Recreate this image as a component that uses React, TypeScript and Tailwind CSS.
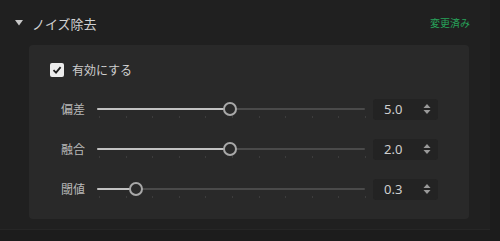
import React from "react";

const jp = { fontFamily: '"Noto Sans CJK JP", "Noto Sans", sans-serif' };

function Spinner() {
  return (
    <svg width="8" height="12" viewBox="0 0 8 12" className="shrink-0">
      <path d="M4 1 L7.5 5 L0.5 5 Z" fill="#9a9a9a" />
      <path d="M4 11 L7.5 7 L0.5 7 Z" fill="#9a9a9a" />
    </svg>
  );
}

function SliderRow({ label, value, pos }: { label: string; value: string; pos: number }) {
  const ticks = Array.from({ length: 11 }, (_, i) => i);
  return (
    <div className="flex h-[40px] items-center pl-[32px]">
      <div className="w-[36px] shrink-0 text-[12px] leading-none text-[#b8b8b8]" style={jp}>
        {label}
      </div>
      <div className="relative h-[40px] w-[268px] shrink-0">
        <div className="absolute left-0 right-0 top-[19px] h-[2px] rounded bg-[#4a4a4a]" />
        <div
          className="absolute left-0 top-[19px] h-[2px] rounded bg-[#c2c2c2]"
          style={{ width: pos }}
        />
        {ticks.map((i) => (
          <div
            key={i}
            className="absolute top-[27px] h-[2px] w-[1px] bg-[#3c3c3c]"
            style={{ left: 2 + i * 26.6 }}
          />
        ))}
        <div
          className="absolute top-[13px] h-[14px] w-[14px] rounded-full border-2 border-[#a8a8a8] bg-[#2a2a2a]"
          style={{ left: pos - 7 }}
        />
      </div>
      <div className="ml-[8px] flex h-[21px] w-[65px] shrink-0 items-center justify-between rounded-[3px] bg-[#232323] pl-[11px] pr-[7px]">
        <span className="text-[13px] leading-none text-[#cfcfcf]" style={{ fontFamily: '"Noto Sans", "Liberation Sans", sans-serif' }}>
          {value}
        </span>
        <Spinner />
      </div>
    </div>
  );
}

export default function App() {
  return (
    <div className="flex h-[241px] w-[500px] flex-col bg-[#1c1c1c]" style={jp}>
      <div className="flex h-[230px] w-[490px] flex-col border-b border-[#262626] bg-[#202020]">
        <div className="flex h-[45px] items-center pl-[15px] pr-[20px] pt-[1px]">
          <svg width="8" height="6" viewBox="0 0 8 6" className="shrink-0">
            <path d="M0 0 L8 0 L4 5.5 Z" fill="#c8c8c8" />
          </svg>
          <span className="ml-[9px] text-[13px] leading-none text-[#d2d2d2]">ノイズ除去</span>
          <span className="ml-auto text-[10px] leading-none text-[#27a35a]">変更済み</span>
        </div>
        <div className="ml-[29px] mr-[21px] flex flex-col rounded-[4px] bg-[#292929] pb-[10px] pt-[18px]">
          <div className="flex h-[14px] items-center pl-[21px]">
            <div className="flex h-[14px] w-[14px] items-center justify-center rounded-[2px] bg-[#ececec]">
              <svg width="10" height="10" viewBox="0 0 10 10">
                <path d="M1.5 5.2 L4 7.6 L8.6 2.2" stroke="#1f1f1f" strokeWidth="1.8" fill="none" />
              </svg>
            </div>
            <span className="ml-[8px] text-[12px] leading-none text-[#cfcfcf]">有効にする</span>
          </div>
          <div className="mt-[12px] flex flex-col">
            <SliderRow label="偏差" value="5.0" pos={133} />
            <SliderRow label="融合" value="2.0" pos={133} />
            <SliderRow label="閾値" value="0.3" pos={39} />
          </div>
        </div>
      </div>
    </div>
  );
}
